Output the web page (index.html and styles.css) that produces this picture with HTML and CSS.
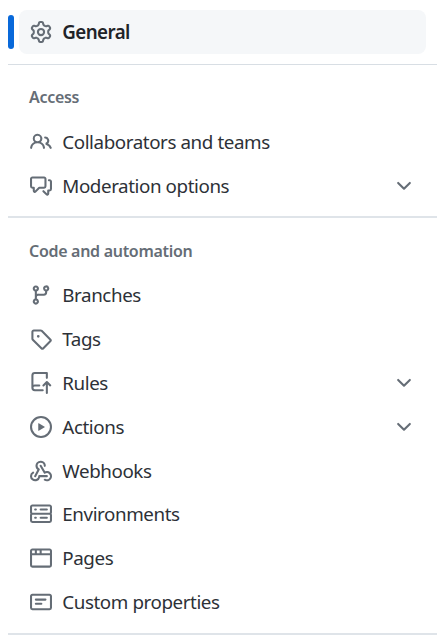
FILE: index.html
```html
<!DOCTYPE html>
<html lang="en">
<head>
<meta charset="utf-8">
<title>Settings</title>
<link rel="stylesheet" href="styles.css">
</head>
<body>
<nav class="sidebar">
  <ul class="list">
    <li><a class="item current"><svg class="icon" viewBox="0 0 16 16"><path d="M8 0a8.2 8.2 0 0 1 .701.031C9.444.095 9.99.645 10.16 1.29l.288 1.107c.018.066.079.158.212.224.231.114.454.243.668.386.123.082.233.09.299.071l1.103-.303c.644-.176 1.392.021 1.82.63.27.385.506.792.704 1.218.315.675.111 1.422-.364 1.891l-.814.806c-.049.048-.098.147-.088.294.016.257.016.515 0 .772-.01.147.038.246.088.294l.814.806c.475.469.679 1.216.364 1.891a7.977 7.977 0 0 1-.704 1.217c-.428.61-1.176.807-1.82.63l-1.102-.302c-.067-.019-.177-.011-.3.071a5.909 5.909 0 0 1-.668.386c-.133.066-.194.158-.211.224l-.29 1.106c-.168.646-.715 1.196-1.458 1.26a8.006 8.006 0 0 1-1.402 0c-.743-.064-1.289-.614-1.458-1.26l-.289-1.106c-.018-.066-.079-.158-.212-.224a5.738 5.738 0 0 1-.668-.386c-.123-.082-.233-.09-.299-.071l-1.103.303c-.644.176-1.392-.021-1.82-.63a8.12 8.12 0 0 1-.704-1.218c-.315-.675-.111-1.422.363-1.891l.815-.806c.05-.048.098-.147.088-.294a6.214 6.214 0 0 1 0-.772c.01-.147-.038-.246-.088-.294l-.815-.806C.635 6.045.431 5.298.746 4.623a7.92 7.92 0 0 1 .704-1.217c.428-.61 1.176-.807 1.82-.63l1.102.302c.067.019.177.011.3-.071.214-.143.437-.272.668-.386.133-.066.194-.158.211-.224l.29-1.106C6.009.645 6.556.095 7.299.03 7.53.01 7.764 0 8 0Zm-.571 1.525c-.036.003-.108.036-.137.146l-.289 1.105c-.147.561-.549.967-.998 1.189-.173.086-.34.183-.5.29-.417.278-.97.423-1.529.27l-1.103-.303c-.109-.03-.175.016-.195.045-.22.312-.412.644-.573.99-.014.031-.021.11.059.19l.815.806c.411.406.562.957.53 1.456a4.709 4.709 0 0 0 0 .582c.032.499-.119 1.05-.53 1.456l-.815.806c-.081.08-.073.159-.059.19.162.346.353.677.573.989.02.03.085.076.195.046l1.102-.303c.56-.153 1.113-.008 1.53.27.161.107.328.204.501.29.447.222.85.629.997 1.189l.289 1.105c.029.109.101.143.137.146a6.6 6.6 0 0 0 1.142 0c.036-.003.108-.036.137-.146l.289-1.105c.147-.561.549-.967.998-1.189.173-.086.34-.183.5-.29.417-.278.97-.423 1.529-.27l1.103.303c.109.029.175-.016.195-.045.22-.313.411-.644.573-.99.014-.031.021-.11-.059-.19l-.815-.806c-.411-.406-.562-.957-.53-1.456a4.709 4.709 0 0 0 0-.582c-.032-.499.119-1.05.53-1.456l.815-.806c.081-.08.073-.159.059-.19a6.464 6.464 0 0 0-.573-.989c-.02-.03-.085-.076-.195-.046l-1.102.303c-.56.153-1.113.008-1.53-.27a4.44 4.44 0 0 0-.501-.29c-.447-.222-.85-.629-.997-1.189l-.289-1.105c-.029-.11-.101-.143-.137-.146a6.6 6.6 0 0 0-1.142 0ZM11 8a3 3 0 1 1-6 0 3 3 0 0 1 6 0ZM9.5 8a1.5 1.5 0 1 0-3.001.001A1.5 1.5 0 0 0 9.5 8Z"/></svg><span class="label">General</span></a></li>
  </ul>
  <section class="group access">
    <h3 class="heading">Access</h3>
    <ul class="list">
      <li><a class="item"><svg class="icon" viewBox="0 0 16 16"><path d="M2 5.5a3.5 3.5 0 1 1 5.898 2.549 5.508 5.508 0 0 1 3.034 4.084.75.75 0 1 1-1.482.235 4 4 0 0 0-7.9 0 .75.75 0 0 1-1.482-.236A5.507 5.507 0 0 1 3.102 8.05 3.493 3.493 0 0 1 2 5.5ZM11 4a3.001 3.001 0 0 1 2.22 5.018 5.01 5.01 0 0 1 2.56 3.012.749.749 0 0 1-.885.954.752.752 0 0 1-.549-.514 3.507 3.507 0 0 0-2.522-2.372.75.75 0 0 1-.574-.73v-.352a.75.75 0 0 1 .416-.672A1.5 1.5 0 0 0 11 5.5.75.75 0 0 1 11 4Zm-5.5-.5a2 2 0 1 0-.001 3.999A2 2 0 0 0 5.5 3.5Z"/></svg><span class="label">Collaborators and teams</span></a></li>
      <li><a class="item"><svg class="icon" viewBox="0 0 16 16"><path d="M1.75 1h8.5c.966 0 1.75.784 1.75 1.75v5.5A1.75 1.75 0 0 1 10.25 10H7.061l-2.574 2.573A1.458 1.458 0 0 1 2 11.543V10h-.25A1.75 1.75 0 0 1 0 8.25v-5.5C0 1.784.784 1 1.75 1ZM1.5 2.75v5.5c0 .138.112.25.25.25h1a.75.75 0 0 1 .75.75v2.19l2.72-2.72a.749.749 0 0 1 .53-.22h3.5a.25.25 0 0 0 .25-.25v-5.5a.25.25 0 0 0-.25-.25h-8.5a.25.25 0 0 0-.25.25Zm13 2a.25.25 0 0 0-.25-.25h-.5a.75.75 0 0 1 0-1.5h.5c.966 0 1.75.784 1.75 1.75v5.5A1.75 1.75 0 0 1 14.25 12H14v1.543a1.458 1.458 0 0 1-2.487 1.03L9.22 12.28a.749.749 0 0 1 .326-1.275.749.749 0 0 1 .734.215l2.22 2.22v-2.19a.75.75 0 0 1 .75-.75h1a.25.25 0 0 0 .25-.25Z"/></svg><span class="label">Moderation options</span><svg class="icon chevron" viewBox="0 0 16 16"><path d="M12.78 5.22a.749.749 0 0 1 0 1.06l-4.25 4.25a.749.749 0 0 1-1.06 0L3.22 6.28a.749.749 0 1 1 1.06-1.06L8 8.939l3.72-3.719a.749.749 0 0 1 1.06 0Z"/></svg></a></li>
    </ul>
  </section>
  <section class="group code">
    <h3 class="heading">Code and automation</h3>
    <ul class="list">
      <li><a class="item"><svg class="icon" viewBox="0 0 16 16"><path d="M9.5 3.25a2.25 2.25 0 1 1 3 2.122V6A2.5 2.5 0 0 1 10 8.5H6a1 1 0 0 0-1 1v1.128a2.251 2.251 0 1 1-1.5 0V5.372a2.25 2.25 0 1 1 1.5 0v1.836A2.493 2.493 0 0 1 6 7h4a1 1 0 0 0 1-1v-.628A2.25 2.25 0 0 1 9.5 3.25Zm-6 0a.75.75 0 1 0 1.5 0 .75.75 0 0 0-1.5 0Zm8.25-.75a.75.75 0 1 0 0 1.5.75.75 0 0 0 0-1.5ZM4.25 12a.75.75 0 1 0 0 1.5.75.75 0 0 0 0-1.5Z"/></svg><span class="label">Branches</span></a></li>
      <li><a class="item"><svg class="icon" viewBox="0 0 16 16"><path d="M1 7.775V2.75C1 1.784 1.784 1 2.75 1h5.025c.464 0 .91.184 1.238.513l6.25 6.25a1.75 1.75 0 0 1 0 2.474l-5.026 5.026a1.75 1.75 0 0 1-2.474 0l-6.25-6.25A1.752 1.752 0 0 1 1 7.775Zm1.5 0c0 .066.026.13.073.177l6.25 6.25a.25.25 0 0 0 .354 0l5.025-5.025a.25.25 0 0 0 0-.354l-6.25-6.25a.25.25 0 0 0-.177-.073H2.75a.25.25 0 0 0-.25.25ZM6 5a1 1 0 1 1 0 2 1 1 0 0 1 0-2Z"/></svg><span class="label">Tags</span></a></li>
      <li><a class="item"><svg class="icon" viewBox="0 0 16 16"><path d="M1 2.5A2.5 2.5 0 0 1 3.5 0h8.75a.75.75 0 0 1 .75.75v3.5a.75.75 0 0 1-1.5 0V1.5h-8a1 1 0 0 0-1 1v6.708A2.493 2.493 0 0 1 3.5 9h3.25a.75.75 0 0 1 0 1.5H3.5a1 1 0 0 0 0 2h5.75a.75.75 0 0 1 0 1.5H3.5A2.5 2.5 0 0 1 1 11.5Zm13.23 7.79-1.224-1.224v6.184a.75.75 0 0 1-1.5 0V9.066L10.28 10.29a.75.75 0 0 1-1.06-1.061l2.505-2.504a.75.75 0 0 1 1.06 0L15.29 9.23a.751.751 0 0 1-.018 1.042.751.751 0 0 1-1.042.018Z"/></svg><span class="label">Rules</span><svg class="icon chevron" viewBox="0 0 16 16"><path d="M12.78 5.22a.749.749 0 0 1 0 1.06l-4.25 4.25a.749.749 0 0 1-1.06 0L3.22 6.28a.749.749 0 1 1 1.06-1.06L8 8.939l3.72-3.719a.749.749 0 0 1 1.06 0Z"/></svg></a></li>
      <li><a class="item"><svg class="icon" viewBox="0 0 16 16"><path d="M8 0a8 8 0 1 1 0 16A8 8 0 0 1 8 0ZM1.5 8a6.5 6.5 0 1 0 13 0 6.5 6.5 0 0 0-13 0Zm4.879-2.773 4.264 2.559a.25.25 0 0 1 0 .428l-4.264 2.559A.25.25 0 0 1 6 10.559V5.442a.25.25 0 0 1 .379-.215Z"/></svg><span class="label">Actions</span><svg class="icon chevron" viewBox="0 0 16 16"><path d="M12.78 5.22a.749.749 0 0 1 0 1.06l-4.25 4.25a.749.749 0 0 1-1.06 0L3.22 6.28a.749.749 0 1 1 1.06-1.06L8 8.939l3.72-3.719a.749.749 0 0 1 1.06 0Z"/></svg></a></li>
      <li><a class="item"><svg class="icon" viewBox="0 0 16 16"><path d="M5.5 4.25a2.25 2.25 0 0 1 4.5 0 .75.75 0 0 0 1.5 0 3.75 3.75 0 1 0-6.14 2.889l-2.272 4.258a.75.75 0 0 0 1.324.706L7 7.25a.75.75 0 0 0-.309-1.015A2.25 2.25 0 0 1 5.5 4.25Z"/><path d="M7.364 3.607a.75.75 0 0 1 1.03.257l2.608 4.349a3.75 3.75 0 1 1-.628 6.785.75.75 0 0 1 .752-1.299 2.25 2.25 0 1 0-.033-3.88.75.75 0 0 1-1.03-.256L7.107 4.636a.75.75 0 0 1 .257-1.03Z"/><path d="M2.9 8.776A.75.75 0 0 1 2.625 9.8 2.25 2.25 0 1 0 6 11.75a.75.75 0 0 1 .75-.751h5.5a.75.75 0 0 1 0 1.5H7.425a3.751 3.751 0 1 1-5.55-3.998.75.75 0 0 1 1.024.274Z"/></svg><span class="label">Webhooks</span></a></li>
      <li><a class="item"><svg class="icon" viewBox="0 0 16 16"><path d="M1.75 1h12.5c.966 0 1.75.784 1.75 1.75v4c0 .372-.116.717-.314 1 .198.283.314.628.314 1v4a1.75 1.75 0 0 1-1.75 1.75H1.75A1.75 1.75 0 0 1 0 12.75v-4c0-.358.109-.707.314-1a1.739 1.739 0 0 1-.314-1v-4C0 1.784.784 1 1.75 1ZM1.5 2.75v4c0 .138.112.25.25.25h12.5a.25.25 0 0 0 .25-.25v-4a.25.25 0 0 0-.25-.25H1.75a.25.25 0 0 0-.25.25Zm.25 5.75a.25.25 0 0 0-.25.25v4c0 .138.112.25.25.25h12.5a.25.25 0 0 0 .25-.25v-4a.25.25 0 0 0-.25-.25ZM7 4.75A.75.75 0 0 1 7.75 4h4.5a.75.75 0 0 1 0 1.5h-4.5A.75.75 0 0 1 7 4.75ZM7.75 10h4.5a.75.75 0 0 1 0 1.5h-4.5a.75.75 0 0 1 0-1.5ZM3 4.75A.75.75 0 0 1 3.75 4h.5a.75.75 0 0 1 0 1.5h-.5A.75.75 0 0 1 3 4.75ZM3.75 10h.5a.75.75 0 0 1 0 1.5h-.5a.75.75 0 0 1 0-1.5Z"/></svg><span class="label">Environments</span></a></li>
      <li><a class="item"><svg class="icon" viewBox="0 0 16 16"><path d="M0 2.75C0 1.784.784 1 1.75 1h12.5c.966 0 1.75.784 1.75 1.75v10.5A1.75 1.75 0 0 1 14.25 15H1.75A1.75 1.75 0 0 1 0 13.25ZM14.5 6h-13v7.25c0 .138.112.25.25.25h12.5a.25.25 0 0 0 .25-.25Zm-6-3.5v2h6V2.75a.25.25 0 0 0-.25-.25ZM5 2.5v2h2v-2Zm-3.25 0a.25.25 0 0 0-.25.25V4.5h2v-2Z"/></svg><span class="label">Pages</span></a></li>
      <li><a class="item"><svg class="icon" viewBox="0 0 16 16"><path d="M0 3.75C0 2.784.784 2 1.75 2h12.5c.966 0 1.75.784 1.75 1.75v8.5A1.75 1.75 0 0 1 14.25 14H1.75A1.75 1.75 0 0 1 0 12.25Zm1.75-.25a.25.25 0 0 0-.25.25v8.5c0 .138.112.25.25.25h12.5a.25.25 0 0 0 .25-.25v-8.5a.25.25 0 0 0-.25-.25ZM3.5 6.25a.75.75 0 0 1 .75-.75h7a.75.75 0 0 1 0 1.5h-7a.75.75 0 0 1-.75-.75Zm.75 2.25h4a.75.75 0 0 1 0 1.5h-4a.75.75 0 0 1 0-1.5Z"/></svg><span class="label">Custom properties</span></a></li>
    </ul>
  </section>
  <div class="end"></div>
</nav>
</body>
</html>
```
FILE: styles.css
```css
* { box-sizing: border-box; }
body {
  margin: 0;
  background: #fff;
  color: #2d3137;
  font-family: "Noto Sans", sans-serif;
  font-size: 18.8px;
}
.sidebar { padding: 10px 9px 0 8px; }
.list { list-style: none; margin: 0; padding: 0 11px; }
.item {
  position: relative;
  display: flex;
  align-items: center;
  height: 43.85px;
  padding: 0 11.5px 0 10.5px;
  border-radius: 8px;
}
.icon { flex: none; width: 22px; height: 22px; fill: #656d76; }
.label { flex: 1; margin-left: 10.8px; letter-spacing: -0.42px; white-space: nowrap; }
.current { background: #f5f7f9; color: #1f2328; }
.current .label { font-weight: 600; letter-spacing: -0.6px; }
.current::before {
  content: "";
  position: absolute;
  left: -11px;
  top: 5px;
  width: 5.5px;
  height: 33.5px;
  border-radius: 3px;
  background: #0969da;
}
.group { border-top: 1px solid #d8dee4; }
.access { margin-top: 10px; height: 152px; }
.code { border-top: 2px solid #dfe4e9; height: 417px; }
.heading {
  margin: 0;
  padding: 20.4px 21px 0;
  height: 55px;
  color: #656d76;
  font-size: 16px;
  line-height: 24px;
  font-weight: 600;
  letter-spacing: -0.3px;
}
.code .heading { padding-top: 21px; height: 55.5px; }
.end { height: 2px; background: #dfe4e9; }
```
